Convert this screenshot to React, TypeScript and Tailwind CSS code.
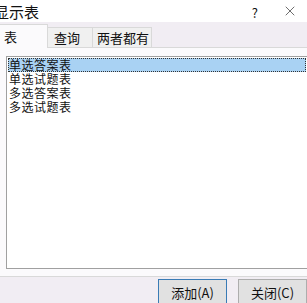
import React from 'react'
import { X } from 'lucide-react'

const items = ['单选答案表', '单选试题表', '多选答案表', '多选试题表']

const font = { fontFamily: '"Noto Sans CJK SC", "Liberation Sans", sans-serif' }

export default function App() {
  return (
    <div className="w-[307px] h-[303px] overflow-hidden bg-[#f1edf3] text-[#111] flex flex-col" style={font}>
      {/* title bar */}
      <div className="h-[22px] bg-white flex items-center shrink-0">
        <span className="-ml-[6px] text-[15px] leading-none whitespace-nowrap">显示表</span>
        <span className="ml-auto text-[13px] leading-none mr-[24px] mt-[2px]">?</span>
        <X className="w-[16px] h-[16px] mr-[9px] text-[#222]" strokeWidth={1} />
      </div>

      {/* tabs */}
      <div className="h-[26px] flex items-end shrink-0">
        <div className="w-[48px] h-[24px] bg-[#fbfafc] border-t border-r border-[#d9d9d9] flex items-center pl-[4px] text-[13px] leading-none">
          表
        </div>
        <div className="w-[45px] h-[21px] bg-[#f0f0f0] border-t border-r border-b border-[#d9d9d9] flex items-center pl-[6px] text-[13px] leading-none whitespace-nowrap">
          查询
        </div>
        <div className="w-[59px] h-[21px] bg-[#f0f0f0] border-t border-r border-b border-[#d9d9d9] flex items-center pl-[4px] text-[13px] leading-none whitespace-nowrap">
          两者都有
        </div>
        <div className="flex-1 border-b border-[#d9d9d9]" />
      </div>

      {/* panel */}
      <div className="h-[229px] bg-[#fbfafc] border-b border-[#d9d9d9] shrink-0 pt-[8px] pl-[6px]">
        <div className="w-[320px] h-[213px] bg-white border border-[#a0a0a0] pt-[1px] pl-[1px]">
          {items.map((t, i) => (
            <div
              key={t}
              className={
                'h-[14px] w-[298px] pl-[1px] flex items-center text-[12px] leading-[14px] whitespace-nowrap ' +
                (i === 0 ? 'bg-[#a9d2f3] outline-1 outline-dotted outline-[#333] -outline-offset-1' : '')
              }
            >
              <span className="tracking-[0.5px]">{t}</span>
            </div>
          ))}
        </div>
      </div>

      {/* buttons */}
      <div className="flex pt-[2px] pl-[158px] gap-[11px]">
        <button className="w-[74px] h-[26px] bg-[#e1e1e1] border border-[#3a7bb5] text-[13px] leading-none flex items-center justify-center whitespace-nowrap">
          添加(A)
        </button>
        <button className="w-[74px] h-[26px] bg-[#e1e1e1] border border-[#adadad] text-[13px] leading-none flex items-center justify-center whitespace-nowrap">
          关闭(C)
        </button>
      </div>
    </div>
  )
}
